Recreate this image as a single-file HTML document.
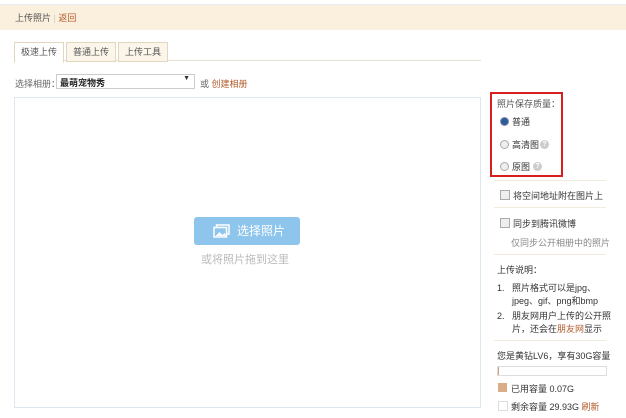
<!DOCTYPE html>
<html><head><meta charset="utf-8"><style>
body{margin:0;width:626px;height:418px;background:#fff;font-family:"Liberation Sans","Noto Sans CJK SC",sans-serif;font-size:9px;color:#333;position:relative;overflow:hidden}
.a{position:absolute;white-space:nowrap}
.bar{left:0;top:4px;width:626px;height:25px;background:#fbf0dd;border-top:1px solid #e8eef3}
.tab{top:42px;height:18px;border:1px solid #e2d6bf;background:#fbf5ea;line-height:18px;text-align:center;color:#555}
.red{color:#b05a2a}
.line{background:#f1ebdc;height:1px;width:112px;left:494px}
.rad{width:7px;height:7px;border:1px solid #aaa;border-radius:50%;background:#eee}
.chk{width:8px;height:8px;border:1px solid #aaa;background:#eee}
.q{width:9px;height:9px;border-radius:50%;background:#ccc;color:#fff;font-size:7px;text-align:center;line-height:9px;font-weight:bold}
</style></head><body>
<div class="a bar"></div>
<div class="a" style="left:15px;top:11px;color:#555">上传照片 <span style="color:#ccc">|</span> <span class="red">返回</span></div>
<div class="a" style="left:14px;top:60px;width:467px;height:1px;background:#e6e1d5"></div>
<div class="a tab" style="left:14px;width:48px;background:#fff;border-bottom-color:#fff;height:19px">极速上传</div>
<div class="a tab" style="left:66px;width:48px">普通上传</div>
<div class="a tab" style="left:118px;width:48px">上传工具</div>
<div class="a" style="left:15px;top:77px;color:#666">选择相册：</div>
<div class="a" style="left:56px;top:74px;width:137px;height:13px;border:1px solid #ccc;background:#fff"><span style="position:absolute;left:3px;top:1px;font-weight:bold;color:#222">最萌宠物秀</span><span style="position:absolute;right:4px;top:0px;font-size:7px">▼</span></div>
<div class="a" style="left:200px;top:77px;color:#666">或 <span class="red">创建相册</span></div>
<div class="a" style="left:14px;top:97px;width:467px;height:311px;border:1px solid #dfe7ee;box-sizing:border-box"></div>
<div class="a" style="left:194px;top:217px;width:106px;height:28px;background:#8ec5ec;border-radius:3px;color:#fff;font-size:12px;line-height:28px">
<svg style="position:absolute;left:19px;top:7px" width="17" height="14" viewBox="0 0 17 14"><rect x="3.5" y="1" width="12.5" height="9" fill="none" stroke="#fff" stroke-width="1.5"/><rect x="1" y="3.5" width="12.5" height="9.5" fill="#8ec5ec" stroke="#fff" stroke-width="1.5"/><path d="M2.5 12l4-4 3 3 2-2 2 3z" fill="#fff"/></svg>
<span style="position:absolute;left:43px">选择照片</span></div>
<div class="a" style="left:201px;top:251px;color:#bbb;font-size:11px">或将照片拖到这里</div>
<div class="a" style="left:490px;top:92px;width:73px;height:85px;border:2px solid #d81e1e;box-sizing:border-box"></div>
<div class="a" style="left:497px;top:97px;color:#555">照片保存质量：</div>
<div class="a rad" style="left:500px;top:117px;background:#2a5d9a;border-color:#88a"></div><div class="a" style="left:512px;top:115px">普通</div>
<div class="a rad" style="left:500px;top:140px"></div><div class="a" style="left:512px;top:138px">高清图</div><div class="a q" style="left:540px;top:140px">?</div>
<div class="a rad" style="left:500px;top:162px"></div><div class="a" style="left:512px;top:160px">原图</div><div class="a q" style="left:533px;top:162px">?</div>
<div class="a line" style="top:180px"></div>
<div class="a chk" style="left:500px;top:190px"></div><div class="a" style="left:513px;top:189px">将空间地址附在图片上</div>
<div class="a line" style="top:207px"></div>
<div class="a chk" style="left:500px;top:218px"></div><div class="a" style="left:513px;top:217px">同步到腾讯微博</div>
<div class="a" style="left:511px;top:236px;color:#888">仅同步公开相册中的照片</div>
<div class="a line" style="top:254px"></div>
<div class="a" style="left:497px;top:263px">上传说明：</div>
<div class="a" style="left:497px;top:282px;line-height:13px">1.&nbsp;&nbsp;&nbsp;照片格式可以是jpg、<br>&nbsp;&nbsp;&nbsp;&nbsp;&nbsp;&nbsp;jpeg、gif、png和bmp</div>
<div class="a" style="left:497px;top:310px;line-height:13px">2.&nbsp;&nbsp;&nbsp;朋友网用户上传的公开照<br>&nbsp;&nbsp;&nbsp;&nbsp;&nbsp;&nbsp;片，还会在<span class="red">朋友网</span>显示</div>
<div class="a line" style="top:340px"></div>
<div class="a" style="left:497px;top:349px">您是黄钻LV6，享有30G容量</div>
<div class="a" style="left:497px;top:366px;width:108px;height:8px;border:1px solid #ddd"><div style="width:1px;height:8px;background:#c9a27a"></div></div>
<div class="a" style="left:498px;top:383px;width:9px;height:9px;background:#d9ae86"></div><div class="a" style="left:511px;top:382px">已用容量 0.07G</div>
<div class="a" style="left:498px;top:401px;width:8px;height:8px;border:1px solid #ddd"></div><div class="a" style="left:511px;top:400px">剩余容量 29.93G <span class="red">刷新</span></div>
</body></html>
